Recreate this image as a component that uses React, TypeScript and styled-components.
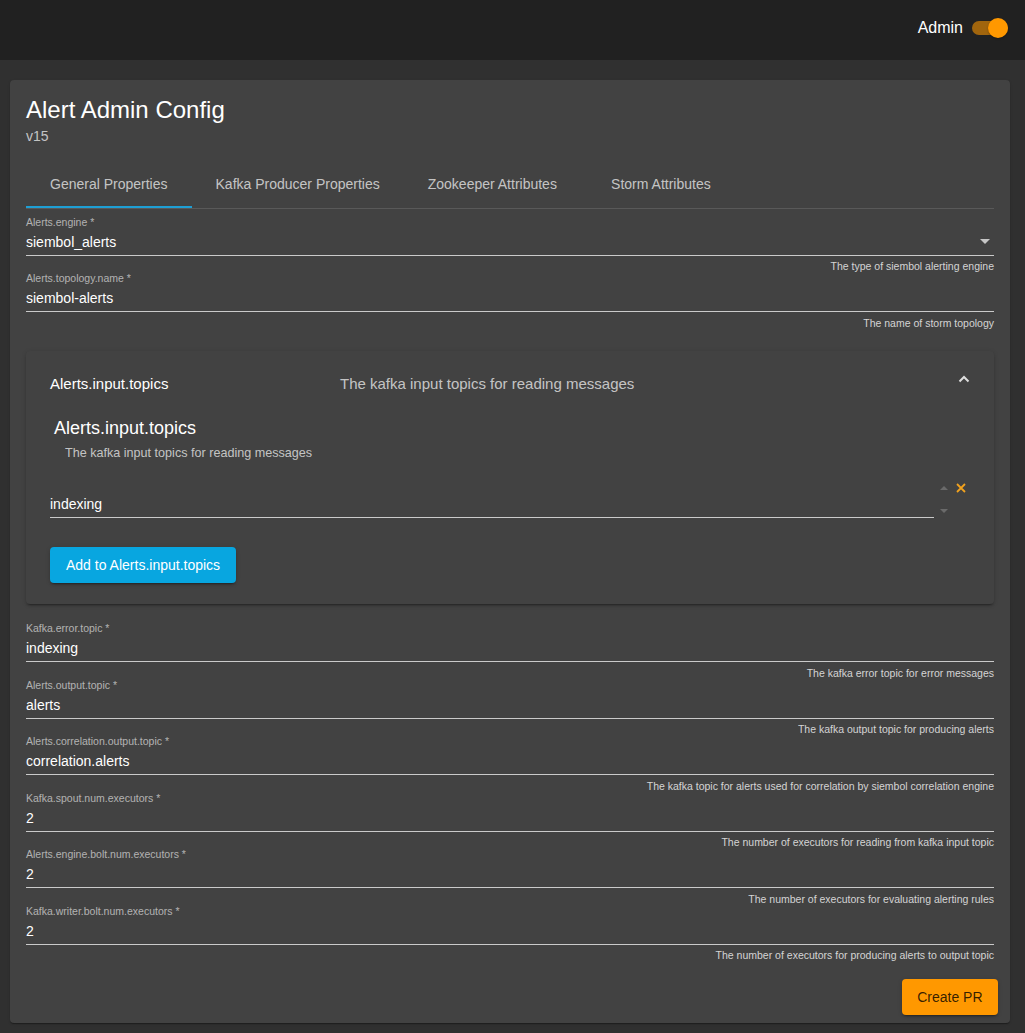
import React from "react";
import styled, { createGlobalStyle } from "styled-components";

const GlobalStyle = createGlobalStyle`
  html, body {
    margin: 0;
    padding: 0;
    background: #303030;
    font-family: "Liberation Sans", Arial, sans-serif;
  }
  * { box-sizing: border-box; }
`;

const TopBar = styled.header`
  height: 60px;
  background: #212121;
  display: flex;
  align-items: center;
  justify-content: flex-end;
  padding: 0 17px 4px 0;
`;

const AdminLabel = styled.span`
  color: #ffffff;
  font-size: 16px;
  line-height: 20px;
  margin-right: 9px;
`;

const ToggleTrack = styled.div`
  width: 36px;
  height: 14px;
  border-radius: 7px;
  background: rgba(255, 152, 0, 0.58);
  display: flex;
  align-items: center;
  justify-content: flex-end;
`;

const ToggleThumb = styled.div`
  width: 20px;
  height: 20px;
  flex-shrink: 0;
  border-radius: 50%;
  background: #ff9800;
  margin: -3px 0;
  box-shadow: 0 1px 2px rgba(0, 0, 0, 0.3);
`;

const Main = styled.main`
  padding: 20px 15px 11px 10px;
`;

const Card = styled.section`
  background: #424242;
  border-radius: 4px;
  padding: 16px 16px 8px 16px;
  box-shadow: 0 2px 1px -1px rgba(0, 0, 0, 0.2), 0 1px 1px 0 rgba(0, 0, 0, 0.14),
    0 1px 3px 0 rgba(0, 0, 0, 0.12);
  display: flex;
  flex-direction: column;
`;

const Title = styled.h1`
  margin: 0;
  font-size: 24px;
  line-height: 28px;
  font-weight: 400;
  color: #ffffff;
`;

const Subtitle = styled.div`
  margin-top: 2px;
  font-size: 14px;
  line-height: 20px;
  color: rgba(255, 255, 255, 0.7);
`;

const TabBar = styled.nav`
  margin-top: 14px;
  display: flex;
  border-bottom: 1px solid rgba(255, 255, 255, 0.12);
`;

const Tab = styled.div<{ $active?: boolean }>`
  height: 48px;
  min-width: 160px;
  padding: 0 24px;
  display: flex;
  align-items: center;
  justify-content: center;
  font-size: 14px;
  color: rgba(255, 255, 255, 0.7);
  box-shadow: ${(p) => (p.$active ? "inset 0 -2px 0 #1e9fd4" : "none")};
`;

const FieldBlock = styled.div<{ $gap?: number }>`
  display: flex;
  flex-direction: column;
  height: 56.5px;
  margin-top: ${(p) => p.$gap ?? 0}px;
`;

const FieldLabel = styled.label`
  font-size: 10.5px;
  line-height: 13px;
  color: rgba(255, 255, 255, 0.6);
`;

const FieldInputRow = styled.div`
  margin-top: 4px;
  height: 23px;
  padding-bottom: 4px;
  border-bottom: 1px solid rgba(255, 255, 255, 0.72);
  display: flex;
  align-items: center;
`;

const FieldValue = styled.span`
  font-size: 14px;
  line-height: 18px;
  color: #ffffff;
  flex: 1;
`;

const SelectArrow = styled.span`
  width: 0;
  height: 0;
  border-left: 5px solid transparent;
  border-right: 5px solid transparent;
  border-top: 5px solid rgba(255, 255, 255, 0.7);
  margin-right: 4px;
`;

const FieldHint = styled.div`
  margin-top: 4.5px;
  font-size: 10.5px;
  line-height: 12px;
  text-align: right;
  color: rgba(255, 255, 255, 0.78);
`;

const Panel = styled.section`
  margin-top: 22.5px;
  background: #424242;
  border-radius: 4px;
  box-shadow: 0 3px 1px -2px rgba(0, 0, 0, 0.2), 0 2px 2px 0 rgba(0, 0, 0, 0.14),
    0 1px 5px 0 rgba(0, 0, 0, 0.12);
`;

const PanelHeader = styled.div`
  height: 64px;
  padding: 0 24px;
  display: flex;
  align-items: center;
  font-size: 15px;
`;

const PanelTitle = styled.span`
  flex: 0 0 274px;
  margin-right: 16px;
  color: #ffffff;
`;

const PanelDescription = styled.span`
  flex: 1;
  color: rgba(255, 255, 255, 0.7);
`;

const Chevron = styled.svg`
  width: 12px;
  height: 8px;
  margin-bottom: 8px;
  flex-shrink: 0;
`;

const PanelBody = styled.div`
  padding: 0 24px 21px;
  display: flex;
  flex-direction: column;
  align-items: flex-start;
`;

const ArrayHeading = styled.h2`
  margin: 2px 0 0 4px;
  font-size: 18px;
  line-height: 22px;
  font-weight: 400;
  color: #ffffff;
`;

const ArrayDescription = styled.div`
  margin-top: 6.5px;
  padding-left: 15px;
  font-size: 12.6px;
  line-height: 15px;
  color: rgba(255, 255, 255, 0.7);
`;

const ItemRow = styled.div`
  margin-top: 20px;
  display: flex;
  align-self: stretch;
  padding-right: 4px;
`;

const ItemField = styled.div`
  flex: 1;
  padding-top: 14.5px;
`;

const ItemInput = styled.div`
  height: 23px;
  padding-bottom: 4px;
  border-bottom: 1px solid rgba(255, 255, 255, 0.72);
  font-size: 14px;
  line-height: 18px;
  color: #ffffff;
`;

const Spinner = styled.div`
  width: 16px;
  height: 38px;
  margin-left: 2px;
  display: flex;
  flex-direction: column;
  justify-content: space-between;
`;

const SpinButton = styled.div`
  height: 15px;
  display: flex;
  align-items: center;
  justify-content: center;
`;

const Triangle = styled.span<{ $down?: boolean }>`
  width: 0;
  height: 0;
  border-left: 4px solid transparent;
  border-right: 4px solid transparent;
  ${(p) =>
    p.$down ? "border-top: 4px solid #6a6a6a;" : "border-bottom: 4px solid #6a6a6a;"}
`;

const RemoveButton = styled.div`
  height: 15px;
  width: 10px;
  margin-left: 4px;
  display: flex;
  align-items: center;
  justify-content: center;
`;

const PrimaryButton = styled.button`
  margin-top: 28px;
  height: 36px;
  padding: 0 16px;
  border: none;
  border-radius: 4px;
  background: #08a6e0;
  color: #ffffff;
  font-family: inherit;
  font-size: 14px;
  box-shadow: 0 3px 1px -2px rgba(0, 0, 0, 0.2), 0 2px 2px 0 rgba(0, 0, 0, 0.14),
    0 1px 5px 0 rgba(0, 0, 0, 0.12);
`;

const Footer = styled.div`
  margin: 17.5px -4px 0 0;
  display: flex;
  justify-content: flex-end;
`;

const AccentButton = styled.button`
  height: 36px;
  padding: 0 15.5px;
  border: none;
  border-radius: 4px;
  background: #ff9800;
  color: rgba(0, 0, 0, 0.8);
  font-family: inherit;
  font-size: 14px;
  box-shadow: 0 3px 1px -2px rgba(0, 0, 0, 0.2), 0 2px 2px 0 rgba(0, 0, 0, 0.14),
    0 1px 5px 0 rgba(0, 0, 0, 0.12);
`;

type FieldProps = {
  label: string;
  value: string;
  hint: string;
  select?: boolean;
  gap?: number;
};

const Field = ({ label, value, hint, select, gap }: FieldProps) => (
  <FieldBlock $gap={gap}>
    <FieldLabel>{label}</FieldLabel>
    <FieldInputRow>
      <FieldValue>{value}</FieldValue>
      {select && <SelectArrow />}
    </FieldInputRow>
    <FieldHint>{hint}</FieldHint>
  </FieldBlock>
);

const tabs = [
  "General Properties",
  "Kafka Producer Properties",
  "Zookeeper Attributes",
  "Storm Attributes",
];

const lowerFields = [
  {
    label: "Kafka.error.topic *",
    value: "indexing",
    hint: "The kafka error topic for error messages",
  },
  {
    label: "Alerts.output.topic *",
    value: "alerts",
    hint: "The kafka output topic for producing alerts",
  },
  {
    label: "Alerts.correlation.output.topic *",
    value: "correlation.alerts",
    hint: "The kafka topic for alerts used for correlation by siembol correlation engine",
  },
  {
    label: "Kafka.spout.num.executors *",
    value: "2",
    hint: "The number of executors for reading from kafka input topic",
  },
  {
    label: "Alerts.engine.bolt.num.executors *",
    value: "2",
    hint: "The number of executors for evaluating alerting rules",
  },
  {
    label: "Kafka.writer.bolt.num.executors *",
    value: "2",
    hint: "The number of executors for producing alerts to output topic",
  },
];

export default function App() {
  return (
    <>
      <GlobalStyle />
      <TopBar>
        <AdminLabel>Admin</AdminLabel>
        <ToggleTrack>
          <ToggleThumb />
        </ToggleTrack>
      </TopBar>
      <Main>
        <Card>
          <Title>Alert Admin Config</Title>
          <Subtitle>v15</Subtitle>
          <TabBar>
            {tabs.map((t, i) => (
              <Tab key={t} $active={i === 0}>
                {t}
              </Tab>
            ))}
          </TabBar>
          <Field
            gap={6.5}
            label="Alerts.engine *"
            value="siembol_alerts"
            hint="The type of siembol alerting engine"
            select
          />
          <Field
            label="Alerts.topology.name *"
            value="siembol-alerts"
            hint="The name of storm topology"
          />
          <Panel>
            <PanelHeader>
              <PanelTitle>Alerts.input.topics</PanelTitle>
              <PanelDescription>The kafka input topics for reading messages</PanelDescription>
              <Chevron viewBox="0 0 12 8">
                <polyline
                  points="1.5,6.5 6,2 10.5,6.5"
                  fill="none"
                  stroke="#dddddd"
                  strokeWidth="2"
                />
              </Chevron>
            </PanelHeader>
            <PanelBody>
              <ArrayHeading>Alerts.input.topics</ArrayHeading>
              <ArrayDescription>The kafka input topics for reading messages</ArrayDescription>
              <ItemRow>
                <ItemField>
                  <ItemInput>indexing</ItemInput>
                </ItemField>
                <Spinner>
                  <SpinButton>
                    <Triangle />
                  </SpinButton>
                  <SpinButton>
                    <Triangle $down />
                  </SpinButton>
                </Spinner>
                <RemoveButton>
                  <svg width="10" height="10" viewBox="0 0 10 10">
                    <path
                      d="M1 1 L9 9 M9 1 L1 9"
                      stroke="#f2a21e"
                      strokeWidth="1.8"
                      fill="none"
                    />
                  </svg>
                </RemoveButton>
              </ItemRow>
              <PrimaryButton>Add to Alerts.input.topics</PrimaryButton>
            </PanelBody>
          </Panel>
          {lowerFields.map((f, i) => (
            <Field key={f.label} gap={i === 0 ? 18.5 : 0} {...f} />
          ))}
          <Footer>
            <AccentButton>Create PR</AccentButton>
          </Footer>
        </Card>
      </Main>
    </>
  );
}
